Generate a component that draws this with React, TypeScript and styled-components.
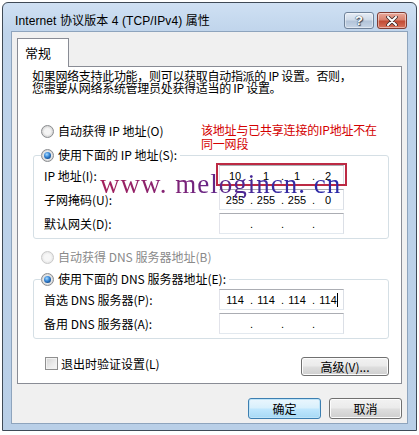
import styled, { createGlobalStyle } from 'styled-components';

const GlobalStyle = createGlobalStyle`
  body {
    margin: 0;
    background: #ffffff;
  }
`;

const uiFont = `"Noto Sans CJK SC", "Liberation Sans", sans-serif`;

const Window = styled.div`
  box-sizing: border-box;
  margin: 2px 0 0 2px;
  width: 415px;
  height: 429px;
  display: flex;
  flex-direction: column;
  border: 1px solid #3f4a56;
  border-radius: 6px 6px 0 0;
  background: linear-gradient(180deg, #cfe0f3 0px, #bfd4eb 30px, #b9cfe7 100%);
  font-family: ${uiFont};
  font-size: 12px;
  color: #000;
`;

const TitleBar = styled.div`
  height: 28px;
  display: flex;
  align-items: flex-start;
  padding: 0 9px 0 12px;
`;

const TitleText = styled.div`
  flex: 1;
  padding-top: 11px;
  font-family: "Liberation Sans", "Noto Sans CJK SC", sans-serif;
  font-size: 12px;
  line-height: 14px;
  letter-spacing: 0.1px;
`;

const CaptionButtons = styled.div`
  display: flex;
  gap: 3px;
  padding-top: 9px;
`;

const CaptionButton = styled.div<{ $danger?: boolean }>`
  box-sizing: border-box;
  width: 30px;
  height: 17px;
  display: flex;
  align-items: center;
  justify-content: center;
  border-radius: 3px;
  border: 1px solid ${(p) => (p.$danger ? '#7e3b32' : '#6f8299')};
  background: ${(p) =>
    p.$danger
      ? 'linear-gradient(180deg, #e9a99c 0%, #d9826f 45%, #c24b34 55%, #d8735c 100%)'
      : 'linear-gradient(180deg, #e6edf6 0%, #cfdbe9 45%, #b3c4d9 55%, #c7d5e6 100%)'};
  box-shadow: inset 0 0 0 1px rgba(255, 255, 255, 0.45);
  color: #fff;
  font-family: "Liberation Sans", sans-serif;
  font-weight: bold;
  font-size: 13px;
  text-shadow: 0 0 1px #3a4656, 0 0 1px #3a4656, 1px 1px 1px #3a4656;
`;

const Client = styled.div`
  flex: 1;
  margin: 0 8px 6px 8px;
  border: 1px solid #8ea4bd;
  background: #f0f0f0;
  display: flex;
  flex-direction: column;
`;

const TabStrip = styled.div`
  display: flex;
  padding: 6px 0 0 5px;
`;

const Tab = styled.div`
  box-sizing: border-box;
  width: 52px;
  height: 29px;
  margin-bottom: -1px;
  padding-left: 7px;
  border: 1px solid #898c95;
  border-bottom: none;
  background: #ffffff;
  font-size: 13px;
  line-height: 27px;
  position: relative;
  z-index: 1;
`;

const Panel = styled.div`
  box-sizing: border-box;
  margin: 0 5px;
  height: 318px;
  border: 1px solid #898c95;
  background: #ffffff;
  position: relative;
  display: flex;
  flex-direction: column;
`;

const Description = styled.div`
  margin: 3px 0 0 14px;
  font-size: 12px;
  line-height: 12px;
  letter-spacing: -0.3px;
`;

const RadioRow = styled.div<{ $top: number; $disabled?: boolean }>`
  display: flex;
  align-items: center;
  gap: 4px;
  height: 14px;
  margin: ${(p) => p.$top}px 0 0 23px;
  color: ${(p) => (p.$disabled ? '#8a8a8a' : '#000')};
  line-height: 14px;
`;

const RadioDot = styled.span<{ $checked?: boolean; $disabled?: boolean }>`
  box-sizing: border-box;
  position: relative;
  flex: none;
  width: 13px;
  height: 13px;
  border-radius: 50%;
  border: 1px solid ${(p) => (p.$disabled ? '#c9c9c9' : '#8a8c8f')};
  background: ${(p) =>
    p.$disabled
      ? 'radial-gradient(circle, #f7f7f7 0 40%, #e6e6e6 75%, #f2f2f2 100%)'
      : 'radial-gradient(circle, #f4f4f4 0 38%, #d4d4d4 72%, #ececec 100%)'};
  &::after {
    content: '';
    display: ${(p) => (p.$checked ? 'block' : 'none')};
    position: absolute;
    inset: 2px;
    border-radius: 50%;
    background: radial-gradient(circle at 40% 35%, #a9dcff 0, #3c8ad8 40%, #124e93 75%, #0b3468 100%);
  }
`;

const GroupBox = styled.div<{ $top: number }>`
  position: relative;
  box-sizing: border-box;
  width: 356px;
  margin: ${(p) => p.$top}px 0 0 15px;
  padding: 9px 0 4px 10px;
  border: 1px solid #d5dfe5;
  border-radius: 3px;
  display: flex;
  flex-direction: column;
  gap: 3px;
`;

const Legend = styled.div`
  position: absolute;
  top: -8px;
  left: 7px;
  display: flex;
  align-items: center;
  gap: 4px;
  height: 14px;
  padding-right: 3px;
  background: #ffffff;
  line-height: 14px;
`;

const FieldRow = styled.div`
  display: flex;
  align-items: center;
  height: 21px;
`;

const FieldLabel = styled.div`
  width: 175px;
  line-height: 14px;
`;

const IpBox = styled.div`
  box-sizing: border-box;
  width: 125px;
  height: 21px;
  display: flex;
  align-items: center;
  padding-left: 3px;
  border: 1px solid;
  border-color: #abadb3 #dbdfe6 #e3e9ef #e2e3ea;
  background: #ffffff;
  font-family: "Liberation Sans", sans-serif;
  font-size: 11px;
`;

const Octet = styled.span`
  width: 24px;
  text-align: center;
  position: relative;
`;

const OctetDot = styled.span`
  width: 7px;
  text-align: right;
  padding-right: 1px;
  box-sizing: border-box;
`;

const Caret = styled.span`
  position: absolute;
  right: 2px;
  top: -1px;
  width: 1px;
  height: 14px;
  background: #000;
`;

const BottomRow = styled.div`
  display: flex;
  justify-content: space-between;
  align-items: flex-start;
  margin: 18px 12px 0 27px;
`;

const CheckRow = styled.div`
  display: flex;
  align-items: center;
  gap: 3px;
  line-height: 13px;
`;

const CheckBox = styled.span`
  box-sizing: border-box;
  width: 13px;
  height: 13px;
  border: 1px solid #8f8f8f;
  background: linear-gradient(135deg, #d3d3d3 0%, #ececec 60%, #f7f7f7 100%);
  box-shadow: inset 0 0 0 1px #f2f2f2;
`;

const Button = styled.div<{ $width: number; $default?: boolean }>`
  box-sizing: border-box;
  width: ${(p) => p.$width}px;
  height: ${(p) => (p.$default !== undefined ? 21 : 19)}px;
  display: flex;
  align-items: center;
  justify-content: center;
  border-radius: 3px;
  border: 1px solid ${(p) => (p.$default ? '#3c7fb1' : '#707070')};
  background: ${(p) =>
    p.$default
      ? 'linear-gradient(180deg, #eaf6fd 0%, #d9f0fc 45%, #bee6fd 55%, #a7d9f5 100%)'
      : 'linear-gradient(180deg, #f2f2f2 0%, #ebebeb 45%, #dddddd 55%, #cfcfcf 100%)'};
  box-shadow: inset 0 0 0 1px ${(p) => (p.$default ? '#bfe4f8' : '#fcfcfc')};
  font-size: 12px;
`;

const ButtonBar = styled.div`
  display: flex;
  justify-content: flex-end;
  gap: 8px;
  padding: 14px 5px 0 0;
`;

const Annotation = styled.div`
  position: absolute;
  left: 183px;
  top: 56px;
  width: 190px;
  color: #d40000;
  font-size: 12px;
  line-height: 14px;
  letter-spacing: -0.2px;
`;

const Highlight = styled.div`
  position: absolute;
  left: 198px;
  top: 96px;
  width: 131px;
  height: 23px;
  box-sizing: border-box;
  border: 2px solid #bc2a44;
  z-index: 2;
`;

const Watermark = styled.div`
  position: absolute;
  left: 82px;
  top: 104px;
  font-family: "Liberation Serif", serif;
  font-size: 27px;
  line-height: 27px;
  letter-spacing: 1px;
  white-space: pre;
  background: linear-gradient(90deg, #a5205a 0%, #7a237a 35%, #3a2aa0 70%, #2a2aa8 100%);
  -webkit-background-clip: text;
  background-clip: text;
  color: transparent;
  z-index: 3;
  pointer-events: none;
`;

function IpField({ octets, caret }: { octets: string[]; caret?: boolean }) {
  return (
    <IpBox>
      {octets.map((o, i) => (
        <span key={i} style={{ display: 'contents' }}>
          <Octet>
            {o}
            {caret && i === 3 && <Caret />}
          </Octet>
          {i < 3 && <OctetDot>.</OctetDot>}
        </span>
      ))}
    </IpBox>
  );
}

function Radio({ label, checked, disabled }: { label: string; checked?: boolean; disabled?: boolean }) {
  return (
    <>
      <RadioDot $checked={checked} $disabled={disabled} />
      <span>{label}</span>
    </>
  );
}

const CloseGlyph = () => (
  <svg width="12" height="10" viewBox="0 0 12 10">
    <path d="M2 1 L10 9 M10 1 L2 9" stroke="#3b2a2a" strokeWidth="3.6" strokeLinecap="round" />
    <path d="M2 1 L10 9 M10 1 L2 9" stroke="#ffffff" strokeWidth="2" strokeLinecap="round" />
  </svg>
);

export default function App() {
  return (
    <>
      <GlobalStyle />
      <Window>
        <TitleBar>
          <TitleText>Internet 协议版本 4 (TCP/IPv4) 属性</TitleText>
          <CaptionButtons>
            <CaptionButton>?</CaptionButton>
            <CaptionButton $danger>
              <CloseGlyph />
            </CaptionButton>
          </CaptionButtons>
        </TitleBar>
        <Client>
          <TabStrip>
            <Tab>常规</Tab>
          </TabStrip>
          <Panel>
            <Description>
              如果网络支持此功能，则可以获取自动指派的 IP 设置。否则，
              <br />
              您需要从网络系统管理员处获得适当的 IP 设置。
            </Description>

            <RadioRow $top={30}>
              <Radio label="自动获得 IP 地址(O)" />
            </RadioRow>

            <GroupBox $top={17}>
              <Legend>
                <Radio label="使用下面的 IP 地址(S):" checked />
              </Legend>
              <FieldRow>
                <FieldLabel>IP 地址(I):</FieldLabel>
                <IpField octets={['10', '1', '1', '2']} />
              </FieldRow>
              <FieldRow>
                <FieldLabel>子网掩码(U):</FieldLabel>
                <IpField octets={['255', '255', '255', '0']} />
              </FieldRow>
              <FieldRow>
                <FieldLabel>默认网关(D):</FieldLabel>
                <IpField octets={['', '', '', '']} />
              </FieldRow>
            </GroupBox>

            <RadioRow $top={11} $disabled>
              <Radio label="自动获得 DNS 服务器地址(B)" disabled />
            </RadioRow>

            <GroupBox $top={15}>
              <Legend>
                <Radio label="使用下面的 DNS 服务器地址(E):" checked />
              </Legend>
              <FieldRow>
                <FieldLabel>首选 DNS 服务器(P):</FieldLabel>
                <IpField octets={['114', '114', '114', '114']} caret />
              </FieldRow>
              <FieldRow>
                <FieldLabel>备用 DNS 服务器(A):</FieldLabel>
                <IpField octets={['', '', '', '']} />
              </FieldRow>
            </GroupBox>

            <BottomRow>
              <CheckRow>
                <CheckBox />
                <span>退出时验证设置(L)</span>
              </CheckRow>
              <Button $width={88}>高级(V)...</Button>
            </BottomRow>

            <Annotation>
              该地址与已共享连接的IP地址不在
              <br />
              同一网段
            </Annotation>
            <Highlight />
            <Watermark>www. melogincn. cn</Watermark>
          </Panel>
          <ButtonBar>
            <Button $width={73} $default>
              确定
            </Button>
            <Button $width={73} $default={false}>
              取消
            </Button>
          </ButtonBar>
        </Client>
      </Window>
    </>
  );
}
